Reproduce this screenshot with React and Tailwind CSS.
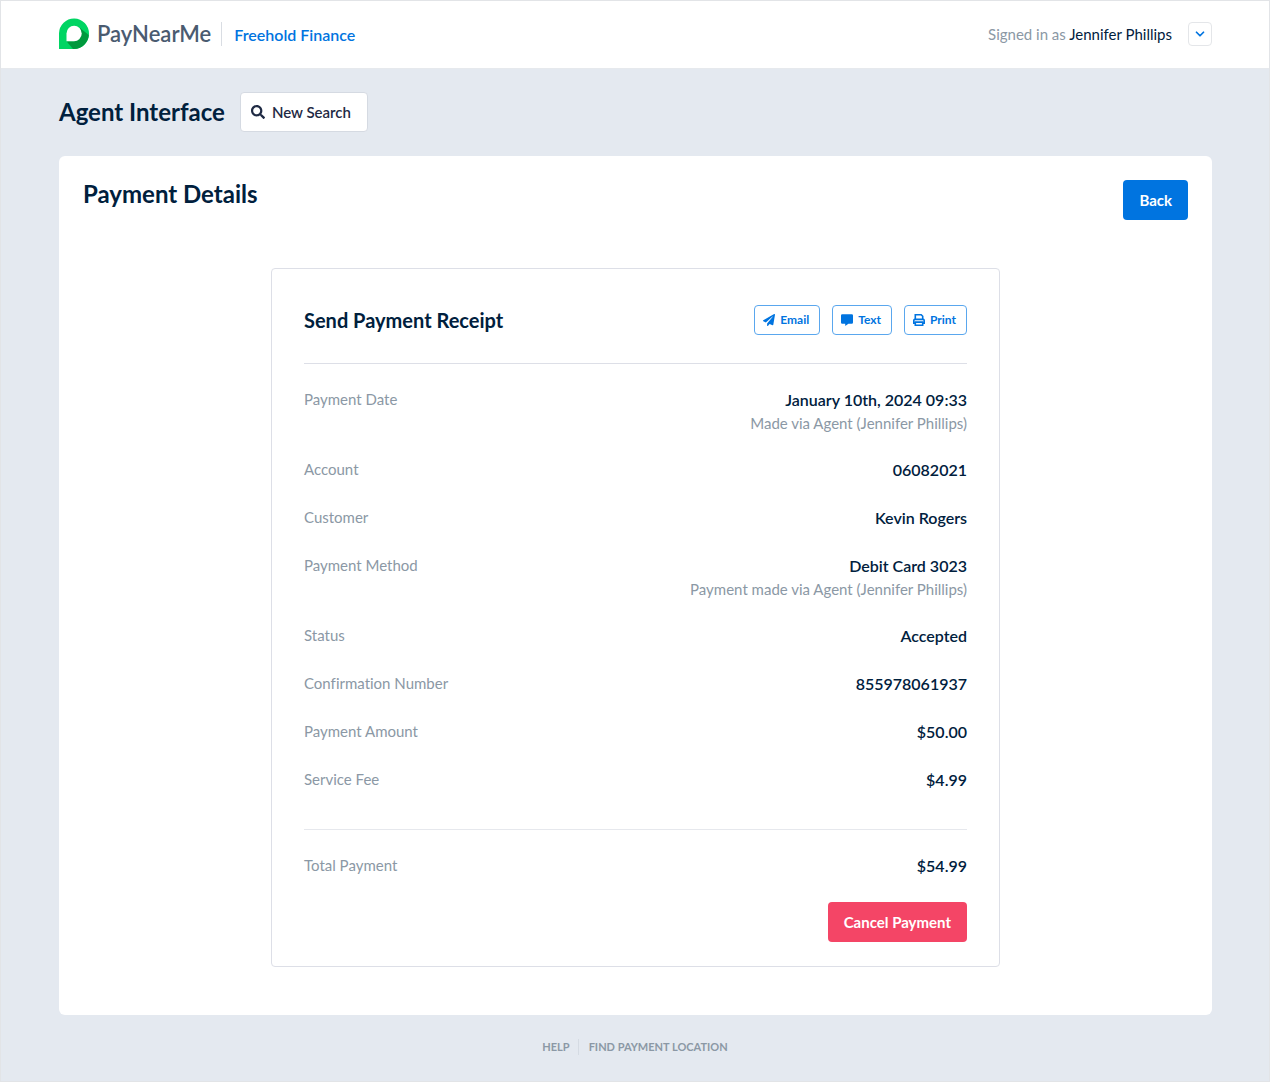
import React from 'react';
import { FaSearch, FaPaperPlane } from 'react-icons/fa';
import { ChevronDown } from 'lucide-react';

const DETAILS = [
  { label: 'Payment Date', value: 'January 10th, 2024 09:33', note: 'Made via Agent (Jennifer Phillips)' },
  { label: 'Account', value: '06082021' },
  { label: 'Customer', value: 'Kevin Rogers' },
  { label: 'Payment Method', value: 'Debit Card 3023', note: 'Payment made via Agent (Jennifer Phillips)' },
  { label: 'Status', value: 'Accepted' },
  { label: 'Confirmation Number', value: '855978061937' },
  { label: 'Payment Amount', value: '$50.00' },
  { label: 'Service Fee', value: '$4.99' },
];

function Logo() {
  return (
    <a href="#" className="flex items-center gap-2">
      <svg width="30" height="31" viewBox="0 0 30 31" aria-hidden="true">
        <path d="M0 31V15.3a15 15.3 0 1 1 15 15.7Z" fill="#00d563" />
        <path d="M21 10 29.8 17A15 15.3 0 0 1 15 31h-1L7.5 23.2H15Z" fill="#00993d" />
        <path d="M7.5 23.2V15.5a7.6 7.7 0 1 1 7.6 7.7Z" fill="#fff" />
      </svg>
      <span className="text-[22px] leading-7 font-semibold text-[#4a5b70]">PayNearMe</span>
    </a>
  );
}

function CommentIcon() {
  return (
    <svg width="12" height="12" viewBox="0 0 12 12" fill="currentColor" aria-hidden="true">
      <path d="M1.2 0.2h9.6a1.2 1.2 0 0 1 1.2 1.2v7.2a1.2 1.2 0 0 1-1.2 1.2H7.4L4.6 11.8c-.2.1-.4 0-.4-.2V9.8H1.2A1.2 1.2 0 0 1 0 8.6V1.4A1.2 1.2 0 0 1 1.2.2Z" />
    </svg>
  );
}

function PrintIcon() {
  return (
    <svg width="12" height="12" viewBox="0 0 12 12" fill="none" stroke="currentColor" strokeWidth="1.6" aria-hidden="true">
      <path d="M2.3 5.4V.8h5.9l1.5 1.5v3.1" />
      <path d="M2.4 9.1H.8V6.5A1.1 1.1 0 0 1 1.9 5.4h8.2a1.1 1.1 0 0 1 1.1 1.1v2.6H9.6" />
      <path d="M2.3 8.1h7.4v3.1H2.3Z" />
    </svg>
  );
}

function ReceiptButton({ icon, children }) {
  return (
    <button
      type="button"
      className="flex h-[30px] items-center gap-[5px] rounded border border-[#5aa7ee] bg-white pr-[10px] pl-2 text-xs font-bold text-[#0074e0]"
    >
      {icon}
      {children}
    </button>
  );
}

function DetailRow({ label, value, note }) {
  return (
    <div className="flex justify-between">
      <dt className="text-[15px] leading-[22px] text-[#8b98a5]">{label}</dt>
      <dd className="text-right">
        <div className="text-base leading-6 font-semibold text-[#00203d]">{value}</div>
        {note && <div className="text-[15px] leading-[22px] text-[#8b98a5]">{note}</div>}
      </dd>
    </div>
  );
}

export default function App() {
  return (
    <div className="flex min-h-screen flex-col border border-[#e2e4e7] bg-[#e4e9f0] font-['Lato',sans-serif] text-[#00203d] [font-variant-ligatures:none]">
      <header className="flex h-[68px] items-center justify-between border-b border-[#e6e9ed] bg-white pr-[57px] pb-0.5 pl-[58px]">
        <div className="flex items-center">
          <Logo />
          <div className="mr-3 ml-[10px] h-6 w-px bg-[#d9dde3]" />
          <a href="#" className="pt-0.5 text-base font-semibold text-[#0074e0]">Freehold Finance</a>
        </div>
        <div className="flex items-center gap-4">
          <p className="pt-0.5 text-[15px] text-[#8b98a5]">
            Signed in as <span className="text-[#00203d]">Jennifer Phillips</span>
          </p>
          <button
            type="button"
            aria-label="Account menu"
            className="flex size-6 items-center justify-center rounded border border-[#e4e6e9] text-[#0074e0]"
          >
            <ChevronDown size={14} strokeWidth={3} />
          </button>
        </div>
      </header>

      <main className="pt-[23px] pr-[57px] pl-[58px]">
        <div className="flex items-center gap-[15px]">
          <h1 className="text-2xl leading-8 font-bold">Agent Interface</h1>
          <button
            type="button"
            className="flex h-10 items-center gap-[7px] rounded border border-[#d5dae2] bg-white pr-4 pl-[10px] text-[15px] font-semibold text-[#1f2a44]"
          >
            <FaSearch size={14} />
            New Search
          </button>
        </div>

        <section className="mt-6 rounded-md bg-white px-6 pt-6 pb-12">
          <div className="flex items-start justify-between">
            <h2 className="text-2xl leading-7 font-bold">Payment Details</h2>
            <button type="button" className="h-10 rounded bg-[#0074e0] px-4 text-[15px] font-bold text-white">
              Back
            </button>
          </div>

          <div className="mx-auto mt-12 max-w-[729px] rounded border border-[#dddfe7] px-8 pt-9 pb-6">
            <div className="flex items-center justify-between border-b border-[#dddfe7] pb-7">
              <h3 className="text-xl leading-7 font-bold">Send Payment Receipt</h3>
              <div className="flex gap-3">
                <ReceiptButton icon={<FaPaperPlane size={12} />}>Email</ReceiptButton>
                <ReceiptButton icon={<CommentIcon />}>Text</ReceiptButton>
                <ReceiptButton icon={<PrintIcon />}>Print</ReceiptButton>
              </div>
            </div>

            <dl className="flex flex-col gap-6 border-b border-[#e6e8ed] pt-6 pb-[37px]">
              {DETAILS.map((row) => (
                <DetailRow key={row.label} {...row} />
              ))}
            </dl>

            <dl className="py-6">
              <DetailRow label="Total Payment" value="$54.99" />
            </dl>

            <div className="flex justify-end">
              <button type="button" className="h-10 rounded bg-[#f44566] px-4 text-[15px] font-bold text-white">
                Cancel Payment
              </button>
            </div>
          </div>
        </section>
      </main>

      <footer className="flex items-center justify-center py-6 text-[11px] leading-4 font-bold text-[#8b98a5]">
        <a href="#" className="pr-2">HELP</a>
        <a href="#" className="border-l border-[#d5dbe3] pl-[10px]">FIND PAYMENT LOCATION</a>
      </footer>
    </div>
  );
}
